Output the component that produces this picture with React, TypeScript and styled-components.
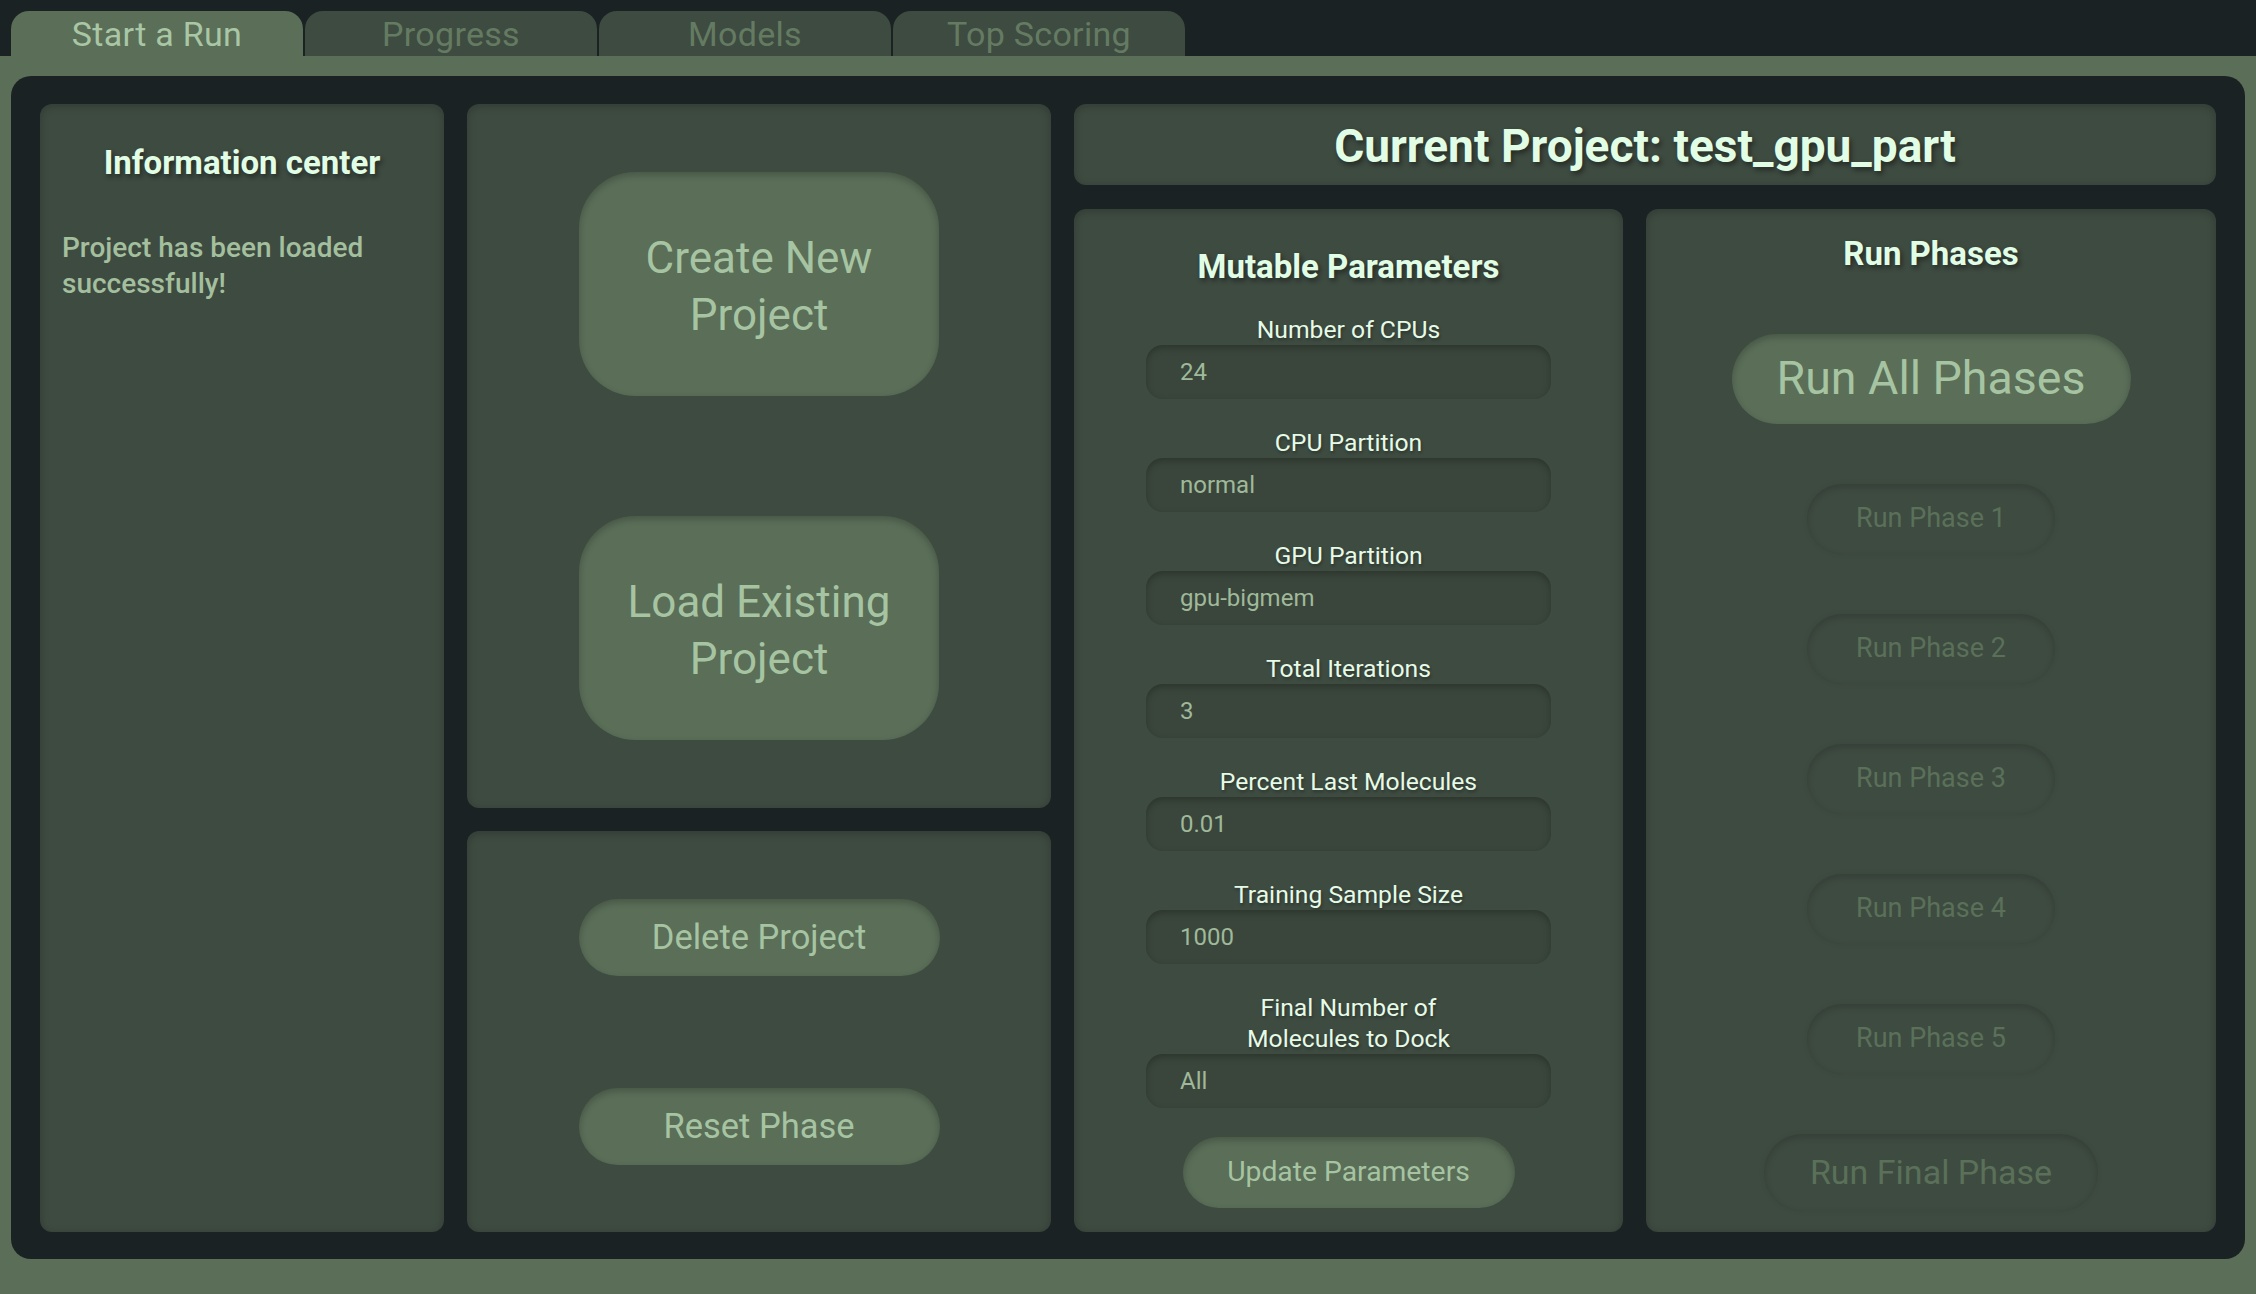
import React from 'react';
import styled, { createGlobalStyle } from 'styled-components';

const GlobalStyle = createGlobalStyle`
  html, body {
    margin: 0;
    padding: 0;
    height: 100%;
  }
  body {
    background: #5a6e58;
    font-family: Roboto, "Noto Sans", "Liberation Sans", sans-serif;
  }
  #root {
    height: 100%;
  }
`;

const Page = styled.div`
  height: 100vh;
  display: flex;
  flex-direction: column;
`;

const TabBar = styled.div`
  flex: 0 0 56px;
  box-sizing: border-box;
  background: #1b2224;
  padding: 11px 0 0 11px;
  display: flex;
  align-items: stretch;
  gap: 2px;
`;

const Tab = styled.div<{ $active?: boolean }>`
  width: 292px;
  display: flex;
  align-items: center;
  justify-content: center;
  border-radius: 18px 18px 0 0;
  font-size: 34px;
  letter-spacing: 0.3px;
  background: ${p => (p.$active ? '#5a6e58' : '#3e4b41')};
  color: ${p => (p.$active ? '#a9c6a5' : '#647b62')};
`;

const Content = styled.div`
  flex: 1 1 auto;
  min-height: 0;
  padding: 20px 11px 35px 11px;
  display: flex;
`;

const Container = styled.div`
  flex: 1 1 auto;
  background: #1b2224;
  border-radius: 20px;
  padding: 28px 29px 27px 29px;
  display: grid;
  grid-template-columns: 404px 584px 1fr;
  gap: 23px;
`;

const Panel = styled.div`
  background: #3e4b41;
  border-radius: 12px;
  box-shadow: inset 0 2px 8px rgba(0, 0, 0, 0.22);
  box-sizing: border-box;
  min-height: 0;
`;

const InfoPanel = styled(Panel)`
  padding: 39px 22px;
`;

const Heading = styled.h2<{ $size?: number }>`
  margin: 0;
  text-align: center;
  font-size: ${p => p.$size || 33}px;
  line-height: 1.2;
  font-weight: 700;
  color: #e1fde5;
  text-shadow: 2px 3px 5px rgba(0, 0, 0, 0.45);
`;

const InfoText = styled.p`
  margin: 47px 0 0 0;
  font-size: 28px;
  line-height: 36px;
  font-weight: 500;
  color: #a3bf9d;
`;

const MiddleColumn = styled.div`
  display: grid;
  grid-template-rows: 704px 1fr;
  gap: 23px;
`;

const ButtonPanel = styled(Panel)<{ $gap: number }>`
  display: flex;
  flex-direction: column;
  align-items: center;
  justify-content: center;
  gap: ${p => p.$gap}px;
`;

const Button = styled.button<{ $w: number; $h: number; $size: number; $radius?: number; $disabled?: boolean }>`
  width: ${p => p.$w}px;
  height: ${p => p.$h}px;
  flex: 0 0 auto;
  border: none;
  border-radius: ${p => p.$radius || p.$h / 2}px;
  font-family: inherit;
  font-size: ${p => p.$size}px;
  line-height: 1.3;
  padding: ${p => (p.$radius ? '6px 0 0 0' : '0')};
  background: ${p => (p.$disabled ? '#3e4b41' : '#5a6e58')};
  color: ${p => (p.$disabled ? '#5a7059' : '#a6c4a2')};
  box-shadow: ${p =>
    p.$disabled
      ? 'inset 0 3px 7px rgba(0, 0, 0, 0.16), 0 0 6px rgba(0, 0, 0, 0.06)'
      : 'inset 0 3px 7px rgba(0, 0, 0, 0.22)'};
  cursor: ${p => (p.$disabled ? 'default' : 'pointer')};
`;

const RightColumn = styled.div`
  display: grid;
  grid-template-rows: 81px 1fr;
  gap: 24px;
  min-height: 0;
`;

const HeaderPanel = styled(Panel)`
  display: flex;
  align-items: center;
  justify-content: center;
  padding-top: 4px;
`;

const BottomRow = styled.div`
  display: grid;
  grid-template-columns: 549px 1fr;
  gap: 23px;
  min-height: 0;
`;

const ParamsPanel = styled(Panel)`
  padding: 38px 0 0 0;
  display: flex;
  flex-direction: column;
  align-items: center;
`;

const ParamList = styled.div`
  margin-top: 27px;
  display: flex;
  flex-direction: column;
  gap: 28px;
  width: 405px;
`;

const Field = styled.label`
  display: flex;
  flex-direction: column;
  align-items: center;
`;

const FieldLabel = styled.span`
  font-size: 24.7px;
  line-height: 31px;
  color: #e6fbe7;
  text-align: center;
  text-shadow: 1px 2px 3px rgba(0, 0, 0, 0.3);
`;

const FieldInput = styled.input`
  width: 100%;
  height: 54px;
  box-sizing: border-box;
  border: none;
  outline: none;
  border-radius: 17px;
  background: #3a463b;
  box-shadow: inset 0 3px 7px rgba(0, 0, 0, 0.25);
  padding: 0 0 0 34px;
  font-family: inherit;
  font-size: 24px;
  color: #9fb99a;
`;

const UpdateRow = styled.div`
  margin-top: 29px;
`;

const PhasesPanel = styled(Panel)`
  padding-top: 25px;
  display: flex;
  flex-direction: column;
  align-items: center;
  gap: 60px;
`;

const params = [
  { label: 'Number of CPUs', value: '24' },
  { label: 'CPU Partition', value: 'normal' },
  { label: 'GPU Partition', value: 'gpu-bigmem' },
  { label: 'Total Iterations', value: '3' },
  { label: 'Percent Last Molecules', value: '0.01' },
  { label: 'Training Sample Size', value: '1000' },
  { label: ['Final Number of', 'Molecules to Dock'], value: 'All' },
];

const tabs = ['Start a Run', 'Progress', 'Models', 'Top Scoring'];

export default function App() {
  return (
    <Page>
      <GlobalStyle />
      <TabBar>
        {tabs.map((t, i) => (
          <Tab key={t} $active={i === 0}>
            {t}
          </Tab>
        ))}
      </TabBar>
      <Content>
        <Container>
          <InfoPanel>
            <Heading>Information center</Heading>
            <InfoText>Project has been loaded successfully!</InfoText>
          </InfoPanel>

          <MiddleColumn>
            <ButtonPanel $gap={120}>
              <Button $w={360} $h={224} $size={44} $radius={56}>
                Create New
                <br />
                Project
              </Button>
              <Button $w={360} $h={224} $size={44} $radius={56}>
                Load Existing
                <br />
                Project
              </Button>
            </ButtonPanel>
            <ButtonPanel $gap={112}>
              <Button $w={361} $h={77} $size={34.5}>
                Delete Project
              </Button>
              <Button $w={361} $h={77} $size={34.5}>
                Reset Phase
              </Button>
            </ButtonPanel>
          </MiddleColumn>

          <RightColumn>
            <HeaderPanel>
              <Heading $size={46}>Current Project: test_gpu_part</Heading>
            </HeaderPanel>
            <BottomRow>
              <ParamsPanel>
                <Heading>Mutable Parameters</Heading>
                <ParamList>
                  {params.map(p => (
                    <Field key={p.value}>
                      <FieldLabel>
                        {Array.isArray(p.label)
                          ? p.label.map((l, i) => (
                              <React.Fragment key={l}>
                                {i > 0 && <br />}
                                {l}
                              </React.Fragment>
                            ))
                          : p.label}
                      </FieldLabel>
                      <FieldInput defaultValue={p.value} />
                    </Field>
                  ))}
                </ParamList>
                <UpdateRow>
                  <Button $w={332} $h={71} $size={28.3}>
                    Update Parameters
                  </Button>
                </UpdateRow>
              </ParamsPanel>

              <PhasesPanel>
                <Heading $size={33}>Run Phases</Heading>
                <Button $w={399} $h={90} $size={46.5}>
                  Run All Phases
                </Button>
                {[1, 2, 3, 4, 5].map(n => (
                  <Button key={n} $w={248} $h={70} $size={27} $disabled>
                    Run Phase {n}
                  </Button>
                ))}
                <Button $w={334} $h={77} $size={34} $disabled>
                  Run Final Phase
                </Button>
              </PhasesPanel>
            </BottomRow>
          </RightColumn>
        </Container>
      </Content>
    </Page>
  );
}
